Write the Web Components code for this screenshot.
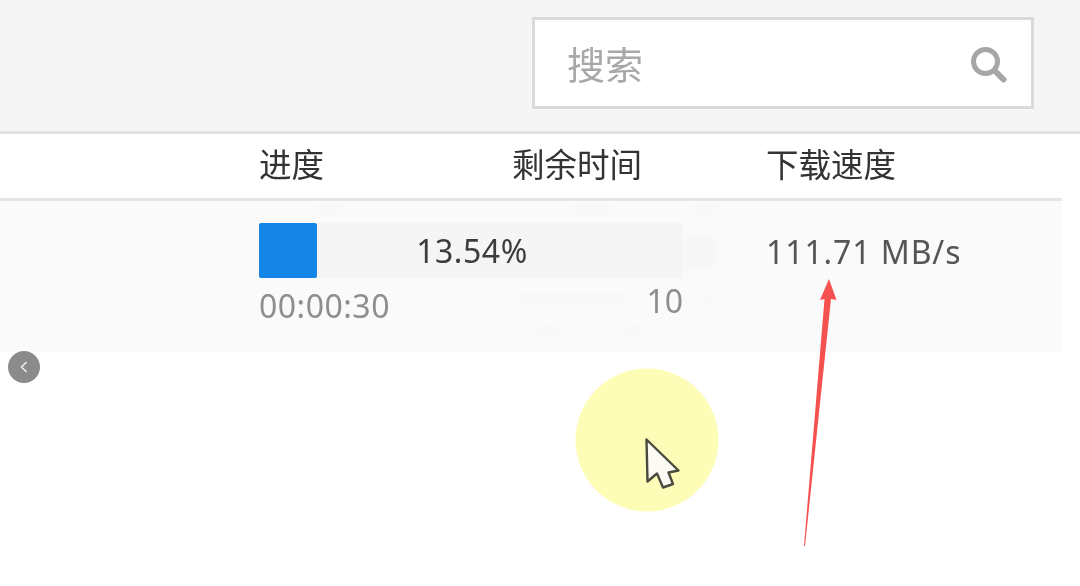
<!DOCTYPE html>
<html lang="zh">
<head>
<meta charset="utf-8">
<style>
  html, body { margin: 0; height: 100%; background: #fff; overflow: hidden; }
  body { font-family: "Noto Sans", "Noto Sans CJK SC", sans-serif; }
</style>
</head>
<body>
<app-toolbar><search-box placeholder="搜索"></search-box></app-toolbar>
<task-table>
  <task-row percent="13.54%" elapsed="00:00:30" count="10" speed="111.71 MB/s"></task-row>
</task-table>
<screen-overlay></screen-overlay>

<script>
  class AppToolbar extends HTMLElement {
    constructor() {
      super();
      this.attachShadow({ mode: 'open' }).innerHTML = `
        <style>
          :host {
            display: flex;
            justify-content: flex-end;
            box-sizing: border-box;
            height: 134px;
            padding: 17px 46px 0 0;
            background: #f5f5f6;
            border-bottom: 3px solid #e2e2e4;
          }
        </style>
        <slot></slot>`;
    }
  }

  class SearchBox extends HTMLElement {
    constructor() {
      super();
      this.attachShadow({ mode: 'open' }).innerHTML = `
        <style>
          :host {
            display: flex;
            align-items: center;
            justify-content: space-between;
            box-sizing: border-box;
            width: 502px;
            height: 92px;
            padding: 0 24px 0 32px;
            background: #fff;
            border: 3px solid #d9dadc;
          }
          span { font-size: 38px; line-height: 1; margin-top: 2px; color: #a8a8a8; filter: blur(.4px); }
          svg { display: block; margin-top: 3px; }
        </style>
        <span></span>
        <svg width="37" height="37" viewBox="0 0 37 37">
          <circle cx="15.5" cy="15.5" r="12" fill="none" stroke="#a6a6a6" stroke-width="5"/>
          <path d="M25 25 L33.5 33.5" stroke="#a6a6a6" stroke-width="6" stroke-linecap="round"/>
        </svg>`;
      this.shadowRoot.querySelector('span').textContent = this.getAttribute('placeholder');
    }
  }

  class TaskTable extends HTMLElement {
    constructor() {
      super();
      this.attachShadow({ mode: 'open' }).innerHTML = `
        <style>
          :host { display: block; width: 1062px; color: #333; }
          .head {
            display: grid;
            grid-template-columns: 253px 254px 1fr;
            align-items: center;
            box-sizing: border-box;
            height: 67px;
            padding: 0 0 6px 259px;
            border-bottom: 3px solid #e6e6e6;
            font-size: 32.5px;
            filter: blur(.4px);
          }
        </style>
        <div class="head"><div>进度</div><div>剩余时间</div><div>下载速度</div></div>
        <slot></slot>`;
    }
  }

  class TaskRow extends HTMLElement {
    constructor() {
      super();
      this.attachShadow({ mode: 'open' }).innerHTML = `
        <style>
          :host {
            display: grid;
            grid-template-columns: 507px 1fr;
            box-sizing: border-box;
            height: 151px;
            padding: 22px 0 0 259px;
            background: #fafafa;
          }
          .cell { display: flex; flex-direction: column; width: 424px; }
          .bar {
            display: flex;
            align-items: center;
            height: 55px;
            background: #f5f5f5;
            font-size: 32px;
            letter-spacing: .55px;
            line-height: 1;
            color: #3c3c3c;
            filter: blur(.3px);
          }
          .fill {
            flex: none;
            width: 58px;
            height: 55px;
            border-radius: 2px;
            background: #1586e8;
          }
          .pct { flex: 1; margin-left: -56px; text-align: center; }
          .meta {
            display: flex;
            justify-content: space-between;
            align-items: center;
            height: 54px;
            font-size: 32px;
            letter-spacing: .5px;
            color: #8e8e8e;
            filter: blur(.4px);
          }
          .count { margin-top: -10px; letter-spacing: 0; }
          .speed {
            font-size: 32px;
            line-height: 1;
            margin-top: 13px;
            letter-spacing: .9px;
            color: #555;
            filter: blur(.4px);
          }
        </style>
        <div class="cell">
          <div class="bar"><div class="fill"></div><div class="pct"></div></div>
          <div class="meta"><span class="time"></span><span class="count"></span></div>
        </div>
        <div class="speed"></div>`;
      const root = this.shadowRoot;
      root.querySelector('.pct').textContent = this.getAttribute('percent');
      root.querySelector('.time').textContent = this.getAttribute('elapsed');
      root.querySelector('.count').textContent = this.getAttribute('count');
      root.querySelector('.speed').textContent = this.getAttribute('speed');
    }
  }

  // everything that floats above the table: video ghosting, pager button, cursor highlight, annotation arrow
  class ScreenOverlay extends HTMLElement {
    constructor() {
      super();
      this.attachShadow({ mode: 'open' }).innerHTML = `
        <style>
          :host { position: absolute; inset: 0; pointer-events: none; }
          svg { position: absolute; left: 0; top: 0; }
          .ghost { filter: blur(2px); }
        </style>
        <svg width="1080" height="586" viewBox="0 0 1080 586">
          <g class="ghost" fill="#f6f6f6">
            <rect x="322" y="207" width="18" height="4"/>
            <rect x="576" y="207" width="34" height="4"/>
            <rect x="694" y="207" width="22" height="4"/>
            <rect x="684" y="238" width="30" height="30"/>
            <rect x="517" y="295" width="108" height="4"/>
            <rect x="702" y="295" width="10" height="4"/>
            <rect x="538" y="328" width="20" height="4"/>
            <rect x="626" y="328" width="18" height="4"/>
          </g>
          <circle cx="24" cy="367" r="16" fill="#8b8b8b"/>
          <path d="M26.5 362 L21.5 367 L26.5 372" fill="none" stroke="#eee" stroke-width="1.5"/>
          <circle cx="647" cy="440" r="71.5" fill="#fdfdb8"/>
          <path d="M646.5 439.5 L678.5 470.5 L668.5 472.5 L673 484 L663 487.5 L657 473.5 L647.5 481.5 Z"
                fill="#fbfbf4" stroke="#4a4a40" stroke-width="2.4" stroke-linejoin="round"/>
          <path d="M829 279 L836.5 300 L831 299 L805 546 L804 546 L824.5 299 L820 300 Z" fill="#f4514f"/>
        </svg>`;
    }
  }

  customElements.define('app-toolbar', AppToolbar);
  customElements.define('search-box', SearchBox);
  customElements.define('task-table', TaskTable);
  customElements.define('task-row', TaskRow);
  customElements.define('screen-overlay', ScreenOverlay);
</script>
</body>
</html>
